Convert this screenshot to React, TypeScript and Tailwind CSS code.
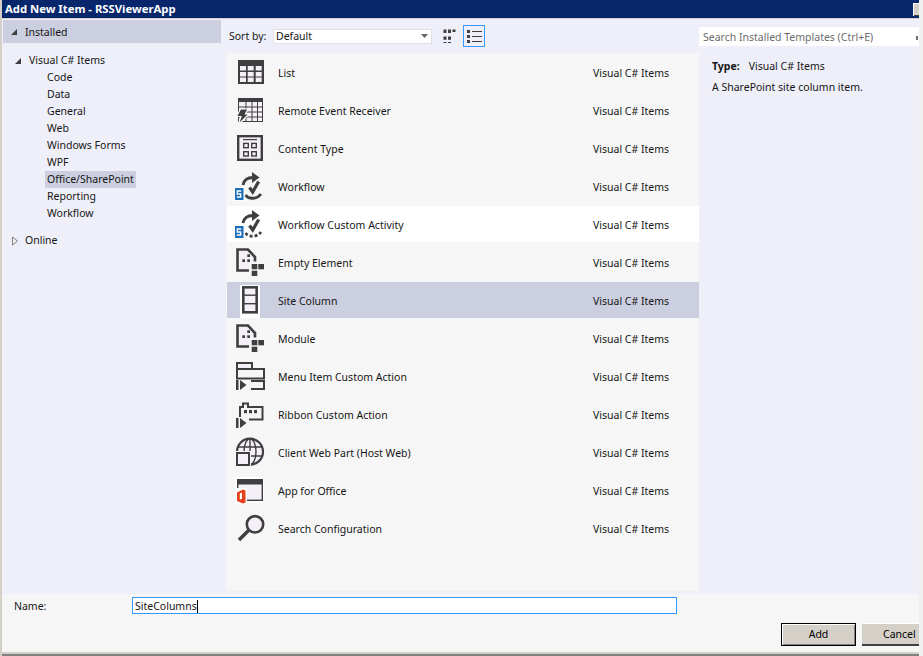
const dark = "#3f3f41"
const pale = "#f5eff8"

function ListIcon() {
  return (
    <>
      <rect x="4" y="4" width="26" height="24" fill={dark} />
      {[10, 16, 21.5].map((y) =>
        [6, 13.7, 21.7].map((x) => <rect key={`${x}-${y}`} x={x} y={y} width="6" height="4.5" fill={pale} />),
      )}
    </>
  )
}

function RemoteIcon() {
  return (
    <>
      <rect x="4.500" y="4.500" width="24" height="23" fill={pale} stroke={dark} />
      <rect x="4" y="4" width="25" height="4" fill={dark} />
      <path d="M4 13h25M4 18h25M4 23h25M12 8v20M18 8v20M23.500 8v20" stroke={dark} fill="none" />
      <path d="M6.500 15h7.500l-2.500 5h3.500l-11 11 3-8.500H2.500z" fill={dark} stroke="#ffffff" strokeWidth="1.200" />
    </>
  )
}

function ContentTypeIcon() {
  return (
    <>
      <rect x="4.200" y="4.200" width="23.600" height="23.600" fill={pale} stroke={dark} strokeWidth="2.400" />
      <rect x="9" y="7" width="14" height="1.200" fill={dark} />
      {[10.7, 19].map((y) =>
        [9, 17].map((x) => (
          <rect key={`${x}-${y}`} x={x + 0.7} y={y + 0.7} width="4.600" height="4.300" fill="none" stroke={dark} strokeWidth="1.400" />
        )),
      )}
    </>
  )
}

function WorkflowIcon({ dashed }: { dashed?: boolean }) {
  return (
    <>
      <path d="M9 15C10 10 14 7.500 19 7.500" fill="none" stroke={dark} strokeWidth="2.800" />
      <path d="M18 2l7.500 5.500-7.500 5.500z" fill={dark} />
      <path d="M15.500 17.500l3.200 4.500 6-10.500" fill="none" stroke={dark} strokeWidth="3.200" />
      <path
        d="M11.500 25C14.500 29.500 23 29.500 27 24"
        fill="none"
        stroke={dark}
        strokeWidth="2.800"
        strokeDasharray={dashed ? "3 2" : undefined}
      />
      <rect x="0" y="17" width="10.500" height="14" fill="#ffffff" />
      <rect x="1" y="18" width="8.500" height="12" fill="#1b6fb8" />
      <path d="M7.200 21H3.300v3h3.400v3H2.800" fill="none" stroke="#ffffff" strokeWidth="1.300" />
    </>
  )
}

function PageIcon() {
  return (
    <>
      <path d="M3.500 3.500H14L21 11v4.500h-5.500v9H3.500z" fill={pale} />
      <path d="M15 24.500H3.500v-21H14L21 11v4.500" fill="none" stroke={dark} strokeWidth="2.600" />
      <rect x="13.300" y="8.300" width="2.700" height="2.700" fill={dark} />
      <rect x="8.300" y="13.300" width="2.700" height="2.700" fill={dark} />
      <rect x="13.300" y="13.300" width="2.700" height="2.700" fill={dark} />
      <rect x="17.700" y="18" width="5.600" height="5.300" fill={dark} />
      <rect x="24.300" y="18" width="5.700" height="5.300" fill={dark} />
      <rect x="17.700" y="24.700" width="5.600" height="5.300" fill={dark} />
    </>
  )
}

function SiteColumnIcon() {
  return (
    <>
      <rect x="6" y="1" width="20" height="33" fill="#ffffff" />
      <rect x="9.300" y="3.300" width="13.400" height="25" fill={pale} stroke={dark} strokeWidth="2.600" />
      <rect x="9" y="10.500" width="14" height="1.400" fill={dark} />
      <rect x="9" y="19" width="14" height="1.400" fill={dark} />
    </>
  )
}

function PlayMark({ x, y }: { x: number; y: number }) {
  return (
    <>
      <rect x={x} y={y} width="2.500" height="10" fill={dark} />
      <path d={`M${x + 4} ${y}l6.500 5-6.500 5z`} fill={dark} />
    </>
  )
}

function MenuIcon() {
  return (
    <>
      <rect x="3" y="3" width="15" height="6" fill={pale} stroke={dark} strokeWidth="2" />
      <path d="M3 9v9.500h27V9H3" fill="none" stroke={dark} strokeWidth="2" />
      <PlayMark x={2} y={20} />
      <path d="M17 21h13v8H17" fill="none" stroke={dark} strokeWidth="2" />
    </>
  )
}

function RibbonIcon() {
  return (
    <>
      <path d="M6 19V9h3V5.500h5V9h14.500v12.500H15" fill="none" stroke={dark} strokeWidth="2" />
      {[10, 15, 20].map((x) => (
        <rect key={x} x={x} y="12" width="3" height="3.200" fill={dark} />
      ))}
      <PlayMark x={2} y={20} />
    </>
  )
}

function GlobeIcon() {
  return (
    <>
      <circle cx="16" cy="15.700" r="13" fill={pale} stroke={dark} strokeWidth="2.200" />
      <ellipse cx="16" cy="15.700" rx="6" ry="13" fill="none" stroke={dark} strokeWidth="1.400" />
      <path d="M3 11h26M3 20h26M16 3v25" fill="none" stroke={dark} strokeWidth="1.400" />
      <rect x="1" y="15" width="16" height="16" fill="#f6f6f6" />
      <rect x="3" y="17" width="12" height="12" fill={pale} stroke={dark} strokeWidth="2" />
    </>
  )
}

function OfficeIcon() {
  return (
    <>
      <rect x="1" y="3" width="29" height="26" fill="#ffffff" />
      <rect x="3.700" y="5.700" width="24.600" height="20.600" fill={pale} stroke={dark} strokeWidth="1.400" />
      <rect x="3" y="5" width="26" height="5.500" fill={dark} />
      <rect x="1" y="14" width="12" height="16" fill="#ffffff" />
      <path
        fillRule="evenodd"
        d="M3 18.500L9 15.500l2.500 1v12L9 29.500l-6-2.500zM5.800 19.500v6l2.200-.5v-6.500z"
        fill="#e3401b"
      />
    </>
  )
}

function SearchIcon() {
  return (
    <>
      <circle cx="21" cy="12.300" r="8.200" fill={pale} stroke={dark} strokeWidth="2.600" />
      <path d="M15 18L5 28" fill="none" stroke={dark} strokeWidth="3.600" />
    </>
  )
}

const templates = [
  { name: "List", icon: <ListIcon /> },
  { name: "Remote Event Receiver", icon: <RemoteIcon /> },
  { name: "Content Type", icon: <ContentTypeIcon /> },
  { name: "Workflow", icon: <WorkflowIcon /> },
  { name: "Workflow Custom Activity", icon: <WorkflowIcon dashed />, hovered: true },
  { name: "Empty Element", icon: <PageIcon /> },
  { name: "Site Column", icon: <SiteColumnIcon />, selected: true },
  { name: "Module", icon: <PageIcon /> },
  { name: "Menu Item Custom Action", icon: <MenuIcon /> },
  { name: "Ribbon Custom Action", icon: <RibbonIcon /> },
  { name: "Client Web Part (Host Web)", icon: <GlobeIcon /> },
  { name: "App for Office", icon: <OfficeIcon /> },
  { name: "Search Configuration", icon: <SearchIcon /> },
]

const categories = ["Code", "Data", "General", "Web", "Windows Forms", "WPF", "Office/SharePoint", "Reporting", "Workflow"]

function TemplateRow({ name, icon, hovered, selected }: { name: string; icon: React.ReactNode; hovered?: boolean; selected?: boolean }) {
  const bg = selected ? "bg-[#cccfdf]" : hovered ? "bg-white" : ""
  return (
    <div className={`flex h-9 items-center pl-[7px] pt-[2px] ${bg}`}>
      <svg width="34" height="34" viewBox="0 0 34 34" className="shrink-0">
        {icon}
      </svg>
      <span className="ml-[10px] w-[315px] pt-[2px]">{name}</span>
      <span className="pt-[2px]">Visual C# Items</span>
    </div>
  )
}

export default function App() {
  return (
    <div className="flex h-[656px] w-[923px] overflow-hidden bg-[#f0f0f0] font-['Noto_Sans',sans-serif] text-[10.5px] text-[#161616]">
      <div className="w-[2px] shrink-0 bg-[#d4d0c8]" />
      <div className="flex w-[917px] flex-col">
        <div className="flex h-[18px] shrink-0 items-center justify-between bg-[#07266c] pl-[3px]">
          <span className="text-[11.3px] font-bold text-white">Add New Item - RSSViewerApp</span>
          <span className="h-[13px] w-[6px] border-l border-t border-white bg-[#d4d0c8] shadow-[inset_0_-1px_0_#404040]" />
        </div>
        <div className="h-px shrink-0 bg-[#d4d0c8]" />

        <div className="flex h-[575px] shrink-0 bg-[#eeeff8]">
          <aside className="w-[224px] shrink-0 pl-px pt-px">
            <div className="flex h-[23px] w-[218px] items-center bg-[#cccfdf] pl-[7px]">
              <svg width="8" height="8" viewBox="0 0 8 8"><path d="M7 1v6H1z" fill={dark} /></svg>
              <span className="ml-[7px] pt-[2px]">Installed</span>
            </div>
            <div className="mt-[9px] flex h-[17px] items-center pl-[11px]">
              <svg width="8" height="8" viewBox="0 0 8 8"><path d="M7 1v6H1z" fill={dark} /></svg>
              <span className="ml-[7px]">Visual C# Items</span>
            </div>
            <ul>
              {categories.map((c) => (
                <li key={c} className="flex h-[17px] items-center pl-[42px]">
                  <span className={`px-[2px] leading-[17px] ${c === "Office/SharePoint" ? "bg-[#cccfdf]" : ""}`}>{c}</span>
                </li>
              ))}
            </ul>
            <div className="mt-[10px] flex h-[17px] items-center pl-[8px]">
              <svg width="8" height="10" viewBox="0 0 8 10"><path d="M1.500 1l5 4-5 4z" fill="#f0f0f0" stroke="#808080" /></svg>
              <span className="ml-[6px]">Online</span>
            </div>
          </aside>

          <main className="flex w-[473px] shrink-0 flex-col">
            <div className="flex h-[34px] shrink-0 items-center pl-[3px]">
              <span className="w-[44px] pt-[2px]">Sort by:</span>
              <div className="flex h-[15px] w-[159px] items-center justify-between border border-[#dfe0ea] bg-white pl-[2px] pr-[3px]">
                <span className="pt-[2px]">Default</span>
                <svg width="7" height="4" viewBox="0 0 7 4"><path d="M0 0h7L3.500 4z" fill="#666666" /></svg>
              </div>
              <svg width="14" height="14" viewBox="0 0 14 14" className="ml-[11px]">
                <rect x="0.500" y="0.500" width="3" height="3.500" fill={dark} />
                <rect x="5" y="0.500" width="3" height="3.500" fill={dark} />
                <rect x="9.500" y="0.500" width="3" height="2.500" fill={dark} />
                <rect x="0.500" y="7.500" width="3" height="3.300" fill={dark} />
                <rect x="5" y="7.500" width="3" height="3.300" fill={dark} />
                <rect x="0.500" y="13" width="3" height="1" fill={dark} />
                <rect x="5" y="13" width="3" height="1" fill={dark} />
              </svg>
              <div className="ml-[6px] flex h-[22px] w-[22px] items-center justify-center border border-[#3399ff]">
                <svg width="15" height="13" viewBox="0 0 15 13">
                  {[0, 5, 10].map((y) => (
                    <g key={y}>
                      <rect x="0" y={y} width="3" height="3" fill={dark} />
                      <rect x="5" y={y + 1} width="10" height="1" fill={dark} />
                    </g>
                  ))}
                </svg>
              </div>
            </div>
            <div className="flex h-[538px] flex-col gap-[2px] bg-[#f6f6f6] pl-px pt-px">
              {templates.map((t) => (
                <TemplateRow key={t.name} {...t} />
              ))}
            </div>
          </main>

          <section className="min-w-0 flex-1">
            <div className="mt-[8px] flex h-[19px] items-center justify-between bg-white pl-[4px] pr-px pt-[3px] text-[#6d6d6d]">
              <span>Search Installed Templates (Ctrl+E)</span>
              <span className="h-1 w-[2px] bg-[#707070]" />
            </div>
            <div className="mt-[12px] pl-[13px]">
              <p className="leading-[17px]">
                <b className="mr-[9px]">Type:</b>Visual C# Items
              </p>
              <p className="mt-[4px] leading-[17px]">A SharePoint site column item.</p>
            </div>
          </section>
        </div>

        <div className="flex flex-1 flex-col bg-[#f6f6f6] pl-3">
          <div className="mt-[3px] flex h-[17px] items-center">
            <span className="w-[118px] pt-[3px]">Name:</span>
            <div className="flex h-[17px] w-[545px] items-center border border-[#3399ff] bg-white pl-[2px] pt-[2px]">
              SiteColumns<span className="inline-block h-[13px] w-px bg-black" />
            </div>
          </div>
          <div className="mt-[9px] flex justify-end gap-[6px]">
            <button className="h-[23px] w-[75px] border border-black bg-[#d4d0c8] text-[10.5px] text-black shadow-[inset_1px_1px_0_#ffffff,inset_-1px_-1px_0_#808080]">Add</button>
            <button className="h-[23px] w-[57px] border-b-2 border-t border-b-[#404040] border-t-white bg-[#d4d0c8] pl-[21px] pt-[2px] text-left text-[10.5px] text-black">Cancel</button>
          </div>
        </div>
        <div className="h-[2px] shrink-0 bg-[#d4d0c8]" />
        <div className="h-[2px] shrink-0 bg-[#808080]" />
      </div>
    </div>
  )
}
